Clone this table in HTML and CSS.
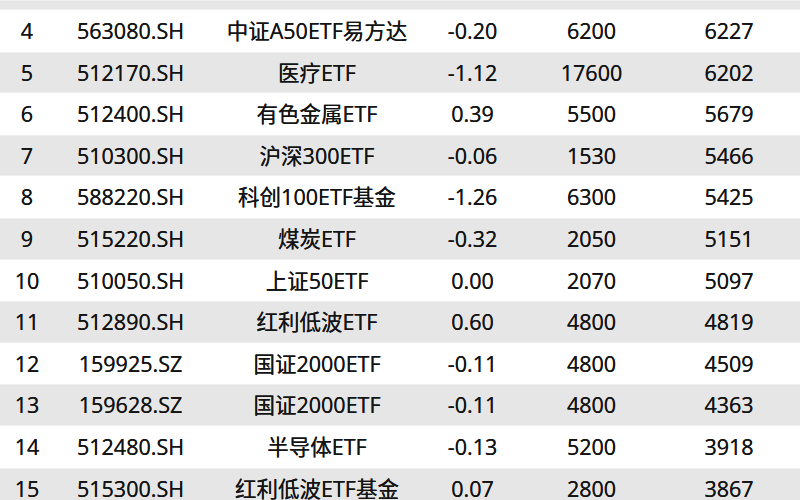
FILE: index.html
```html
<!DOCTYPE html>
<html lang="zh-CN">
<head>
<meta charset="utf-8">
<link rel="stylesheet" href="styles.css">
</head>
<body>
<div class="sheet">
  <div class="row band top"></div>
  <div class="row"><span>4</span><span>563080.SH</span><span>中证A50ETF易方达</span><span>-0.20</span><span>6200</span><span>6227</span></div>
  <div class="row band"><span>5</span><span>512170.SH</span><span>医疗ETF</span><span>-1.12</span><span>17600</span><span>6202</span></div>
  <div class="row"><span>6</span><span>512400.SH</span><span>有色金属ETF</span><span>0.39</span><span>5500</span><span>5679</span></div>
  <div class="row band"><span>7</span><span>510300.SH</span><span>沪深300ETF</span><span>-0.06</span><span>1530</span><span>5466</span></div>
  <div class="row"><span>8</span><span>588220.SH</span><span>科创100ETF基金</span><span>-1.26</span><span>6300</span><span>5425</span></div>
  <div class="row band"><span>9</span><span>515220.SH</span><span>煤炭ETF</span><span>-0.32</span><span>2050</span><span>5151</span></div>
  <div class="row"><span>10</span><span>510050.SH</span><span>上证50ETF</span><span>0.00</span><span>2070</span><span>5097</span></div>
  <div class="row band"><span>11</span><span>512890.SH</span><span>红利低波ETF</span><span>0.60</span><span>4800</span><span>4819</span></div>
  <div class="row"><span>12</span><span>159925.SZ</span><span>国证2000ETF</span><span>-0.11</span><span>4800</span><span>4509</span></div>
  <div class="row band"><span>13</span><span>159628.SZ</span><span>国证2000ETF</span><span>-0.11</span><span>4800</span><span>4363</span></div>
  <div class="row"><span>14</span><span>512480.SH</span><span>半导体ETF</span><span>-0.13</span><span>5200</span><span>3918</span></div>
  <div class="row band"><span>15</span><span>515300.SH</span><span>红利低波ETF基金</span><span>0.07</span><span>2800</span><span>3867</span></div>
</div>
</body>
</html>
```
FILE: styles.css
```css
html, body {
  margin: 0;
  padding: 0;
  background: #ffffff;
}
body {
  width: 800px;
  height: 500px;
  overflow: hidden;
  font-family: "Open Sans", "Noto Sans CJK SC", sans-serif;
  font-size: 21.5px;
  color: #141414;
}
.sheet {
  display: flex;
  flex-direction: column;
}
.row {
  display: grid;
  grid-template-columns: 54px 153px 220px 91px 147px 128px 1fr;
  align-items: center;
  height: 41.6px;
  background: #ffffff;
}
.row.band {
  background: #e6e6e6;
  box-shadow: inset 0 1px 0 #f0f0f0, inset 0 -1px 0 #f0f0f0;
}
.row.top {
  height: 10px;
}
.row span {
  text-align: center;
  white-space: nowrap;
  line-height: 1;
  text-shadow: 0 0 0.4px #141414;
}
```
